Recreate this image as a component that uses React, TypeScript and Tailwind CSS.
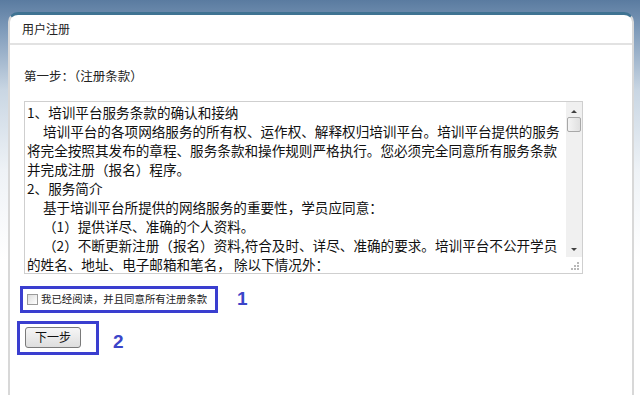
const cjk = "font-['Microsoft_YaHei','Noto_Sans_CJK_SC',sans-serif]";

const terms: { text: string; indent?: boolean }[] = [
  { text: "1、培训平台服务条款的确认和接纳" },
  { text: "培训平台的各项网络服务的所有权、运作权、解释权归培训平台。培训平台提供的服务", indent: true },
  { text: "将完全按照其发布的章程、服务条款和操作规则严格执行。您必须完全同意所有服务条款" },
  { text: "并完成注册（报名）程序。" },
  { text: "2、服务简介" },
  { text: "基于培训平台所提供的网络服务的重要性，学员应同意：", indent: true },
  { text: "（1）提供详尽、准确的个人资料。", indent: true },
  { text: "（2）不断更新注册（报名）资料,符合及时、详尽、准确的要求。培训平台不公开学员", indent: true },
  { text: "的姓名、地址、电子邮箱和笔名， 除以下情况外：" },
];

function FakeScrollbar() {
  return (
    <div className="flex w-[16px] flex-col">
      <div className="flex h-[155px] flex-col items-center bg-[#f0f0f0]">
        <div className="mt-[8px] h-0 w-0 border-x-[3px] border-b-[3px] border-x-transparent border-b-[#404040]" />
        <div className="mt-[4px] h-[15px] w-[14px] rounded-[2px] border border-[#a8a8a8] bg-[linear-gradient(90deg,#f4f4f4,#e0e0e0)]" />
        <div className="flex-1" />
        <div className="mb-[6px] h-0 w-0 border-x-[3px] border-t-[3px] border-x-transparent border-t-[#404040]" />
      </div>
      <div className="flex flex-1 items-end justify-end p-[2px]">
        <svg width="9" height="9" viewBox="0 0 9 9">
          <rect x="6" y="0" width="2" height="2" fill="#b8b8b8" />
          <rect x="3" y="3" width="2" height="2" fill="#b8b8b8" />
          <rect x="6" y="3" width="2" height="2" fill="#b8b8b8" />
          <rect x="0" y="6" width="2" height="2" fill="#b8b8b8" />
          <rect x="3" y="6" width="2" height="2" fill="#b8b8b8" />
          <rect x="6" y="6" width="2" height="2" fill="#b8b8b8" />
        </svg>
      </div>
    </div>
  );
}

export default function App() {
  return (
    <div
      className={`h-[395px] w-[640px] overflow-hidden bg-[linear-gradient(180deg,#5a7ba0_0px,#7f9bba_30px,#c9d6e3_90px,#eef2f6_170px,#ffffff_260px)] pl-[8px] pr-[6px] pt-[12px] ${cjk} text-[#222]`}
    >
      <div className="h-full rounded-t-[10px] border-x-2 border-t-[3px] border-x-[#d8d8d8] border-t-[#3f7392] bg-white">
        <div className="flex h-[30px] items-center border-b-2 border-[#e2e2e2] pl-[12px] text-[12px]">
          用户注册
        </div>
        <div className="pl-[14px]">
          <div className="pt-[23px] text-[12.5px] leading-[16px]">第一步：（注册条款）</div>
          <div className="mt-[17px] flex h-[173px] w-[559px] border border-[#cfcfcf] bg-white">
            <div className="flex-1 overflow-hidden pl-[2px] pt-[1px] text-[13.6px] leading-[19px] text-[#111]">
              {terms.map((t, i) => (
                <div key={i} className={`whitespace-nowrap ${t.indent ? "pl-[16px]" : ""}`}>
                  {t.text}
                </div>
              ))}
            </div>
            <FakeScrollbar />
          </div>

          <div className="ml-[-4px] mt-[11px] flex items-center">
            <div className="flex h-[27px] w-[198px] items-center border-[3px] border-[#3a3ecf] pl-[4px]">
              <span className="h-[11px] w-[11px] border border-[#9a9a9a] bg-[linear-gradient(135deg,#dcdcdc,#ffffff)]" />
              <span className="ml-[3px] whitespace-nowrap text-[10.4px] text-[#222]">
                我已经阅读，并且同意所有注册条款
              </span>
            </div>
            <span className="ml-[19px] font-['Liberation_Sans',Arial,sans-serif] text-[19px] font-bold text-[#3b45c9]">
              1
            </span>
          </div>

          <div className="ml-[-7px] mt-[7px] flex items-end">
            <div className="h-[34px] w-[82px] border-[3px] border-[#3a3ecf] pl-[5px] pt-[3px]">
              <button className="flex h-[21px] w-[56px] items-center justify-center rounded-[3px] border border-[#7a7a7a] bg-[linear-gradient(180deg,#f6f6f6,#dedede)] text-[12px] text-[#111]">
                下一步
              </button>
            </div>
            <span className="mb-[-2px] ml-[14px] font-['Liberation_Sans',Arial,sans-serif] text-[19px] font-bold text-[#3b45c9]">
              2
            </span>
          </div>
        </div>
      </div>
    </div>
  );
}
